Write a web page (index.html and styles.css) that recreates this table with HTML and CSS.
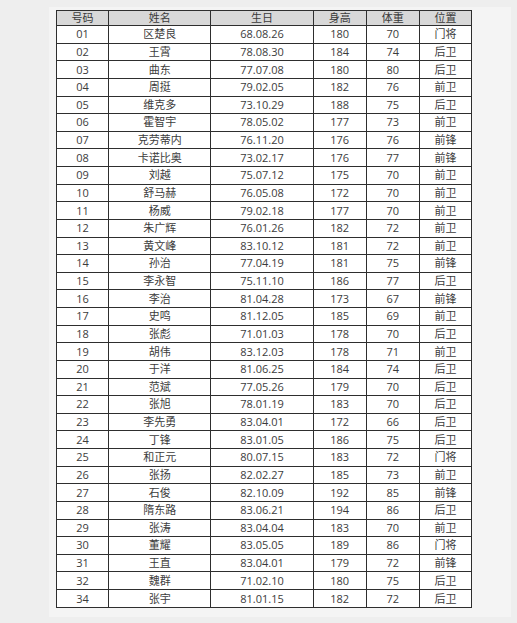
FILE: index.html
```html
<!DOCTYPE html>
<html lang="zh-CN">
<head>
<meta charset="utf-8">
<title>球员名单</title>
<link rel="stylesheet" href="styles.css">
</head>
<body>
<div class="paper">
<table class="roster">
<colgroup>
<col class="c-no"><col class="c-name"><col class="c-date"><col class="c-h"><col class="c-w"><col class="c-pos">
</colgroup>
<thead>
<tr><th>号码</th><th>姓名</th><th>生日</th><th>身高</th><th>体重</th><th>位置</th></tr>
</thead>
<tbody>
<tr><td>01</td><td>区楚良</td><td>68.08.26</td><td>180</td><td>70</td><td>门将</td></tr>
<tr><td>02</td><td>王霄</td><td>78.08.30</td><td>184</td><td>74</td><td>后卫</td></tr>
<tr><td>03</td><td>曲东</td><td>77.07.08</td><td>180</td><td>80</td><td>后卫</td></tr>
<tr><td>04</td><td>周挺</td><td>79.02.05</td><td>182</td><td>76</td><td>前卫</td></tr>
<tr><td>05</td><td>维克多</td><td>73.10.29</td><td>188</td><td>75</td><td>后卫</td></tr>
<tr><td>06</td><td>霍智宇</td><td>78.05.02</td><td>177</td><td>73</td><td>前卫</td></tr>
<tr><td>07</td><td>克劳蒂内</td><td>76.11.20</td><td>176</td><td>76</td><td>前锋</td></tr>
<tr><td>08</td><td>卡诺比奥</td><td>73.02.17</td><td>176</td><td>77</td><td>前锋</td></tr>
<tr><td>09</td><td>刘越</td><td>75.07.12</td><td>175</td><td>70</td><td>前卫</td></tr>
<tr><td>10</td><td>舒马赫</td><td>76.05.08</td><td>172</td><td>70</td><td>前卫</td></tr>
<tr><td>11</td><td>杨威</td><td>79.02.18</td><td>177</td><td>70</td><td>前卫</td></tr>
<tr><td>12</td><td>朱广辉</td><td>76.01.26</td><td>182</td><td>72</td><td>前卫</td></tr>
<tr><td>13</td><td>黄文峰</td><td>83.10.12</td><td>181</td><td>72</td><td>前卫</td></tr>
<tr><td>14</td><td>孙治</td><td>77.04.19</td><td>181</td><td>75</td><td>前锋</td></tr>
<tr><td>15</td><td>李永智</td><td>75.11.10</td><td>186</td><td>77</td><td>后卫</td></tr>
<tr><td>16</td><td>李治</td><td>81.04.28</td><td>173</td><td>67</td><td>前锋</td></tr>
<tr><td>17</td><td>史鸣</td><td>81.12.05</td><td>185</td><td>69</td><td>前卫</td></tr>
<tr><td>18</td><td>张彪</td><td>71.01.03</td><td>178</td><td>70</td><td>后卫</td></tr>
<tr><td>19</td><td>胡伟</td><td>83.12.03</td><td>178</td><td>71</td><td>前卫</td></tr>
<tr><td>20</td><td>于洋</td><td>81.06.25</td><td>184</td><td>74</td><td>后卫</td></tr>
<tr><td>21</td><td>范斌</td><td>77.05.26</td><td>179</td><td>70</td><td>后卫</td></tr>
<tr><td>22</td><td>张旭</td><td>78.01.19</td><td>183</td><td>70</td><td>后卫</td></tr>
<tr><td>23</td><td>李先勇</td><td>83.04.01</td><td>172</td><td>66</td><td>后卫</td></tr>
<tr><td>24</td><td>丁锋</td><td>83.01.05</td><td>186</td><td>75</td><td>后卫</td></tr>
<tr><td>25</td><td>和正元</td><td>80.07.15</td><td>183</td><td>72</td><td>门将</td></tr>
<tr><td>26</td><td>张扬</td><td>82.02.27</td><td>185</td><td>73</td><td>前卫</td></tr>
<tr><td>27</td><td>石俊</td><td>82.10.09</td><td>192</td><td>85</td><td>前锋</td></tr>
<tr><td>28</td><td>隋东路</td><td>83.06.21</td><td>194</td><td>86</td><td>后卫</td></tr>
<tr><td>29</td><td>张涛</td><td>83.04.04</td><td>183</td><td>70</td><td>前卫</td></tr>
<tr><td>30</td><td>董耀</td><td>83.05.05</td><td>189</td><td>86</td><td>门将</td></tr>
<tr><td>31</td><td>王直</td><td>83.04.01</td><td>179</td><td>72</td><td>前锋</td></tr>
<tr><td>32</td><td>魏群</td><td>71.02.10</td><td>180</td><td>75</td><td>后卫</td></tr>
<tr><td>34</td><td>张宇</td><td>81.01.15</td><td>182</td><td>72</td><td>后卫</td></tr>
</tbody>
</table>
</div>
</body>
</html>
```

FILE: styles.css
```css
html, body {
  margin: 0;
  padding: 0;
  background: #eeeeee;
}
body {
  width: 517px;
  height: 623px;
  overflow: hidden;
  font-family: "Open Sans", "Noto Sans CJK SC", sans-serif;
  color: #333333;
}
.paper {
  margin: 7px 0 0 49px;
  width: 462px;
  padding: 3px 0 0 7px;
  box-sizing: border-box;
  background: #f4f4f4;
  height: 610px;
}
.roster {
  border-collapse: collapse;
  table-layout: fixed;
  width: 416px;
  height: 598px;
  background: #ffffff;
  font-size: 11px;
  border: 1px solid #444444;
}
.c-no { width: 52px; }
.c-name { width: 102px; }
.c-date { width: 102px; }
.c-h { width: 53px; }
.c-w { width: 53px; }
.c-pos { width: 52px; }
.roster th,
.roster td {
  border: 1px solid #2e2e2e;
  padding: 0;
  text-align: center;
  line-height: 14px;
  font-weight: normal;
  white-space: nowrap;
}
.roster th {
  background: #d8d8d8;
  color: #3a3a3a;
}
.roster td {
  color: #3c3c3c;
}
```
